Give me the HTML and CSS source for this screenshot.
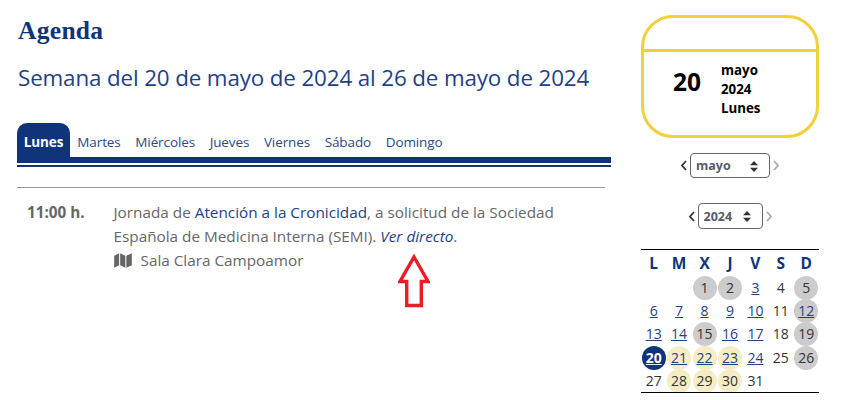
FILE: index.html
```html
<!DOCTYPE html>
<html lang="es">
<head>
<meta charset="utf-8">
<title>Agenda</title>
<link rel="stylesheet" href="styles.css">
</head>
<body>
<div class="page">
  <main class="main">
    <h1>Agenda</h1>
    <h2>Semana del 20 de mayo de 2024 al 26 de mayo de 2024</h2>
    <nav class="tabs">
      <a class="tab active">Lunes</a>
      <a class="tab">Martes</a>
      <a class="tab">Miércoles</a>
      <a class="tab">Jueves</a>
      <a class="tab">Viernes</a>
      <a class="tab">Sábado</a>
      <a class="tab">Domingo</a>
    </nav>
    <div class="tabline"></div>
    <hr class="rule">
    <section class="event">
      <div class="time">11:00 h.</div>
      <div class="desc">
        <p>Jornada de <a class="link">Atención a la Cronicidad</a>, a solicitud de la Sociedad Española de Medicina Interna (SEMI). <a class="link live">Ver directo</a>.</p>
        <p class="place"><svg class="map" viewBox="0 0 20 17" width="18" height="15"><path d="M0 3.2 5.6.4V13.8L0 16.6ZM6.8.4 12.6 3V16.6L6.8 13.8ZM13.8 3 20 .4V13.8L13.8 16.6Z" fill="#666"/></svg>Sala Clara Campoamor</p>
      </div>
    </section>
    <svg class="arrow" viewBox="0 0 32 54" width="32" height="54"><path d="M16 3 30 27.500H23.300V51.500H8.700V27.500H2Z" fill="#fff" stroke="#ed1c24" stroke-width="3.400"/></svg>
  </main>
  <aside class="side">
    <div class="today">
      <div class="today-top"></div>
      <div class="today-body">
        <div class="today-num">20</div>
        <div class="today-text"><span>mayo</span><span>2024</span><span>Lunes</span></div>
      </div>
    </div>
    <div class="picker picker-month">
      <svg class="chev" viewBox="0 0 6 11" width="6" height="11"><path d="M5 1 1 5.500 5 10"/></svg>
      <select class="sel sel-month"><option>mayo</option></select>
      <svg class="chev off" viewBox="0 0 6 11" width="6" height="11"><path d="M1 1 5 5.500 1 10"/></svg>
    </div>
    <div class="picker picker-year">
      <svg class="chev" viewBox="0 0 6 11" width="6" height="11"><path d="M5 1 1 5.500 5 10"/></svg>
      <select class="sel sel-year"><option>2024</option></select>
      <svg class="chev off" viewBox="0 0 6 11" width="6" height="11"><path d="M1 1 5 5.500 1 10"/></svg>
    </div>
    <table class="cal">
      <thead><tr><th>L</th><th>M</th><th>X</th><th>J</th><th>V</th><th>S</th><th>D</th></tr></thead>
      <tbody>
        <tr><td></td><td></td><td><span class="d grey">1</span></td><td><span class="d grey">2</span></td><td><a class="d">3</a></td><td><span class="d">4</span></td><td><span class="d grey">5</span></td></tr>
        <tr><td><a class="d">6</a></td><td><a class="d">7</a></td><td><a class="d">8</a></td><td><a class="d">9</a></td><td><a class="d">10</a></td><td><span class="d">11</span></td><td><a class="d grey">12</a></td></tr>
        <tr><td><a class="d">13</a></td><td><a class="d">14</a></td><td><span class="d grey">15</span></td><td><a class="d">16</a></td><td><a class="d">17</a></td><td><span class="d">18</span></td><td><span class="d grey">19</span></td></tr>
        <tr><td><a class="d now">20</a></td><td><a class="d week">21</a></td><td><a class="d week">22</a></td><td><a class="d week">23</a></td><td><a class="d">24</a></td><td><span class="d">25</span></td><td><span class="d grey">26</span></td></tr>
        <tr><td><span class="d">27</span></td><td><span class="d week">28</span></td><td><span class="d week">29</span></td><td><span class="d week">30</span></td><td><span class="d">31</span></td><td></td><td></td></tr>
      </tbody>
    </table>
  </aside>
</div>
</body>
</html>
```
FILE: styles.css
```css
* { box-sizing: border-box; }
html, body { margin: 0; height: 400px; overflow: hidden; background: #fff; }
body { font-family: "Open Sans", "Noto Sans", sans-serif; color: #666; }
.page { display: flex; padding: 0 0 0 17px; height: 400px; }
.main { position: relative; width: 594px; flex: none; }
h1 { margin: 15px 0 0 1px; font: bold 25.500px/32px "Liberation Serif", serif; color: #0f3479; letter-spacing: .3px; }
h2 { margin: 15px 0 0 1px; font-size: 22.350px; line-height: 31px; font-weight: 400; color: #1f4185; letter-spacing: -.12px; white-space: nowrap; }
.tabs { display: flex; margin-top: 30px; height: 34px; font-size: 13.500px; }
.tab { padding: 10px 7.300px 0; color: #2c4a86; line-height: 18px; letter-spacing: -.1px; }
.tab.active { width: 53px; padding: 10px 0 0; text-align: center; background: #0f3479; color: #fff; font-weight: 700; border-radius: 10px 10px 0 0; }
.tabline { height: 10px; border-top: 6px solid #0f3479; border-bottom: 2px solid #0f3479; }
.rule { margin: 20px 6px 0 0; border: 0; border-top: 1px solid #999; }
.event { display: flex; padding: 12px 0 0 10px; font-size: 15.300px; line-height: 24px; }
.time { width: 86.500px; flex: none; font-weight: 700; color: #666; }
.desc { width: 460px; }
.desc p { margin: 0; }
.link { color: #1f4185; }
.live { font-style: italic; }
.place { display: flex; align-items: center; }
.map { margin-right: 9px; }
.arrow { position: absolute; left: 381px; top: 254px; }
.side { width: 178px; margin-left: 30px; flex: none; }
.today { height: 123px; margin-top: 15px; border: 3px solid #f1d039; border-radius: 32px; display: flex; flex-direction: column; }
.today-top { height: 34px; border-bottom: 3px solid #f1d039; flex: none; }
.today-body { display: flex; align-items: flex-start; flex: 1; padding: 9px 0 0 29px; color: #000; font-weight: 700; }
.today-num { width: 48px; margin-top: 6px; font-size: 24.500px; line-height: 30px; }
.today-text { display: flex; flex-direction: column; font-size: 13.300px; line-height: 19px; }
.picker { display: flex; justify-content: center; align-items: center; gap: 3px; }
.picker-month { margin-top: 15px; height: 25px; }
.picker-year { margin-top: 25px; height: 26px; }
.chev { fill: none; stroke: #333; stroke-width: 1.800; }
.chev.off { stroke: #aaa; }
.sel { appearance: none; height: 25px; border: 1px solid #666; border-radius: 4px; background: #fff url("data:image/svg+xml,%3Csvg xmlns='http://www.w3.org/2000/svg' width='8' height='11'%3E%3Cpath d='M4 0 8 4.300H0ZM4 11 0 6.700H8Z' fill='%23333'/%3E%3C/svg%3E") no-repeat; font: 700 12.500px "Open Sans", sans-serif; color: #555d68; padding: 0 0 0 5px; }
.sel-month { width: 80px; background-position: 59px 7px; }
.sel-year { width: 65px; background-position: 44px 7px; height: 26px; }
.cal { width: 178px; margin-top: 20px; border-collapse: collapse; table-layout: fixed; border-top: 1px solid #000; border-bottom: 1px solid #000; font-size: 14px; color: #333; }
.cal th { height: 27px; padding: 0 0 1px; font-size: 15.500px; font-weight: 700; color: #0f3479; line-height: 20px; }
.cal td { height: 23.200px; padding: 0; text-align: center; }
.d { display: block; width: 24px; height: 24px; margin: -.5px auto; line-height: 24px; border-radius: 50%; }
a.d { color: #1f4185; text-decoration: underline; }
.grey { background: #ccc; }
.week { background: #f7edc4; }
.now { background: #0f3479; color: #fff !important; font-weight: 700; }
```
